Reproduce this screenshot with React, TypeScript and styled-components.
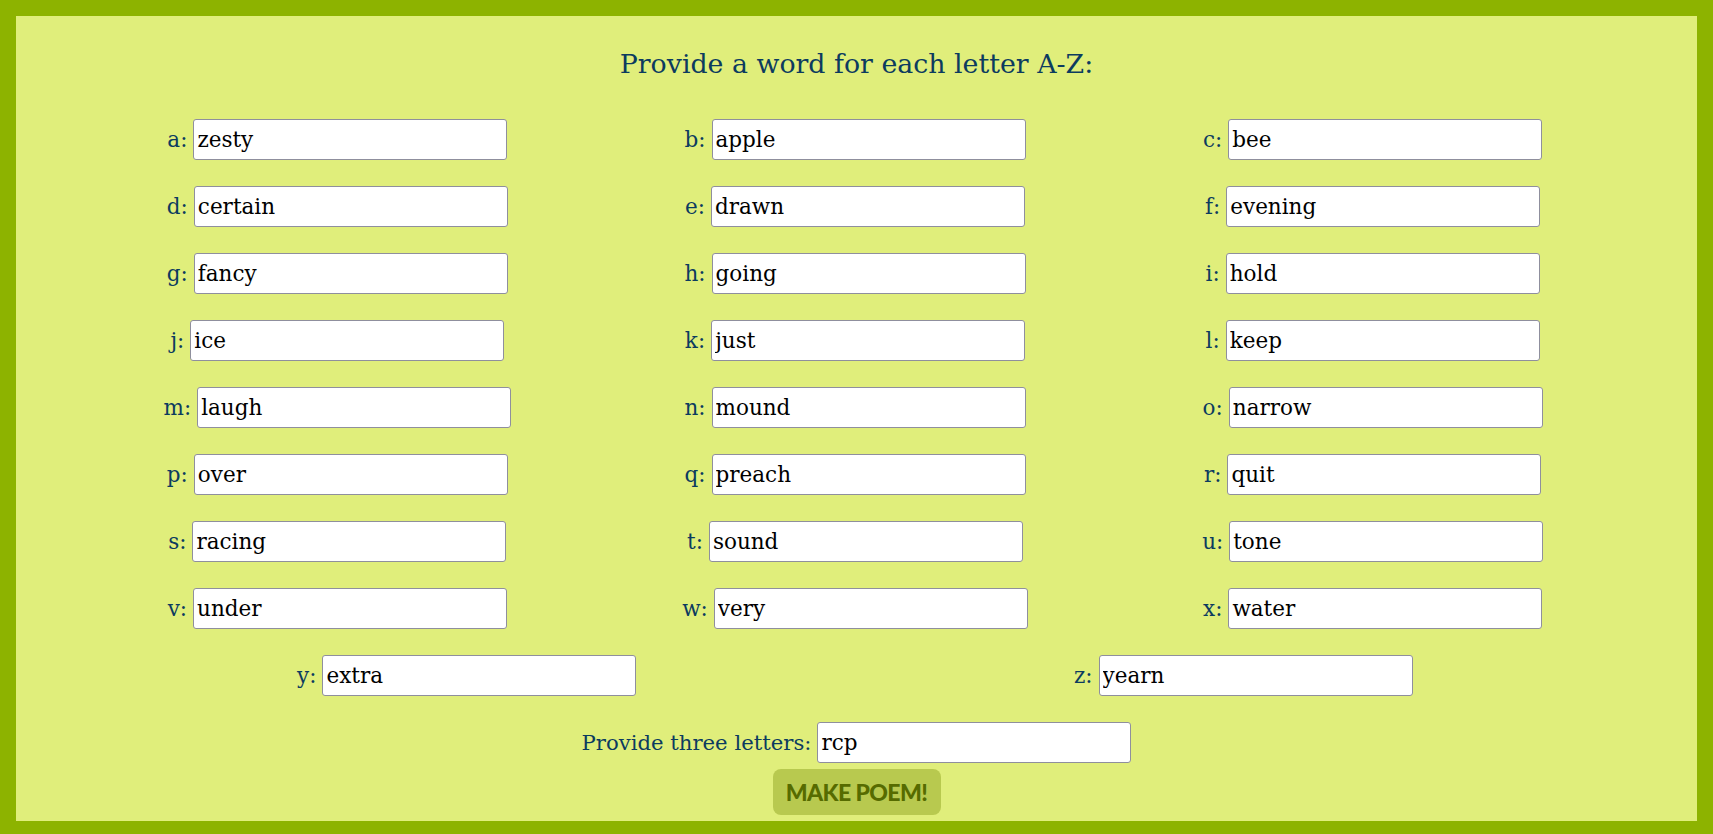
import React from 'react';
import styled, { createGlobalStyle } from 'styled-components';

const words: [string, string][] = [
  ['a', 'zesty'],
  ['b', 'apple'],
  ['c', 'bee'],
  ['d', 'certain'],
  ['e', 'drawn'],
  ['f', 'evening'],
  ['g', 'fancy'],
  ['h', 'going'],
  ['i', 'hold'],
  ['j', 'ice'],
  ['k', 'just'],
  ['l', 'keep'],
  ['m', 'laugh'],
  ['n', 'mound'],
  ['o', 'narrow'],
  ['p', 'over'],
  ['q', 'preach'],
  ['r', 'quit'],
  ['s', 'racing'],
  ['t', 'sound'],
  ['u', 'tone'],
  ['v', 'under'],
  ['w', 'very'],
  ['x', 'water'],
  ['y', 'extra'],
  ['z', 'yearn'],
];

function App() {
  return (
    <>
      <GlobalStyle />
      <Frame>
        <Title>Provide a word for each letter A-Z:</Title>
        <Grid>
          {words.map(([letter, word]) => (
            <Field key={letter}>
              <span>{letter}:</span>
              <WordInput type="text" defaultValue={word} />
            </Field>
          ))}
        </Grid>
        <LettersRow>
          <span>Provide three letters:</span>
          <WordInput type="text" defaultValue="rcp" />
        </LettersRow>
        <MakeButton type="button">MAKE POEM!</MakeButton>
      </Frame>
    </>
  );
}

const GlobalStyle = createGlobalStyle`
  html, body {
    margin: 0;
    padding: 0;
    overflow: hidden;
  }
  body {
    font-family: "DejaVu Serif", serif;
  }
`;

const Frame = styled.main`
  box-sizing: border-box;
  display: flex;
  flex-direction: column;
  align-items: center;
  border: 16px solid #8db300;
  background-color: #e0ee7b;
  padding: 32px 64px 6px;
  color: #0c3b5f;
`;

const Title = styled.h2`
  margin: 0 0 40px;
  font-family: "DejaVu Serif", serif;
  font-size: 26.8px;
  font-weight: 400;
  line-height: 31px;
  color: #0c3b5f;
`;

const Grid = styled.div`
  display: flex;
  flex-wrap: wrap;
  row-gap: 26px;
  width: 100%;
  margin-left: -3px;
`;

const Field = styled.label`
  flex: 1 0 33%;
  display: flex;
  justify-content: center;
  align-items: center;
  gap: 6px;
  font-size: 21.5px;
  line-height: 24px;
`;

const LettersRow = styled(Field)`
  flex: none;
  margin-top: 26px;
  font-size: 21.2px;
`;

const WordInput = styled.input`
  box-sizing: border-box;
  width: 314px;
  height: 41px;
  padding: 0 3px;
  border: 1px solid #8f8f9d;
  border-radius: 3px;
  background: #ffffff;
  font-family: "DejaVu Serif", serif;
  font-size: 21.5px;
  color: #000000;
  outline: none;
`;

const MakeButton = styled.button`
  box-sizing: border-box;
  margin-top: 6px;
  width: 168px;
  height: 46px;
  border: none;
  border-radius: 8px;
  background-color: #b8c94f;
  color: #566b00;
  font-family: Lato, "Open Sans", sans-serif;
  font-weight: 900;
  font-size: 23px;
  letter-spacing: -0.6px;
  padding: 0;
  cursor: pointer;
`;

export default App;
